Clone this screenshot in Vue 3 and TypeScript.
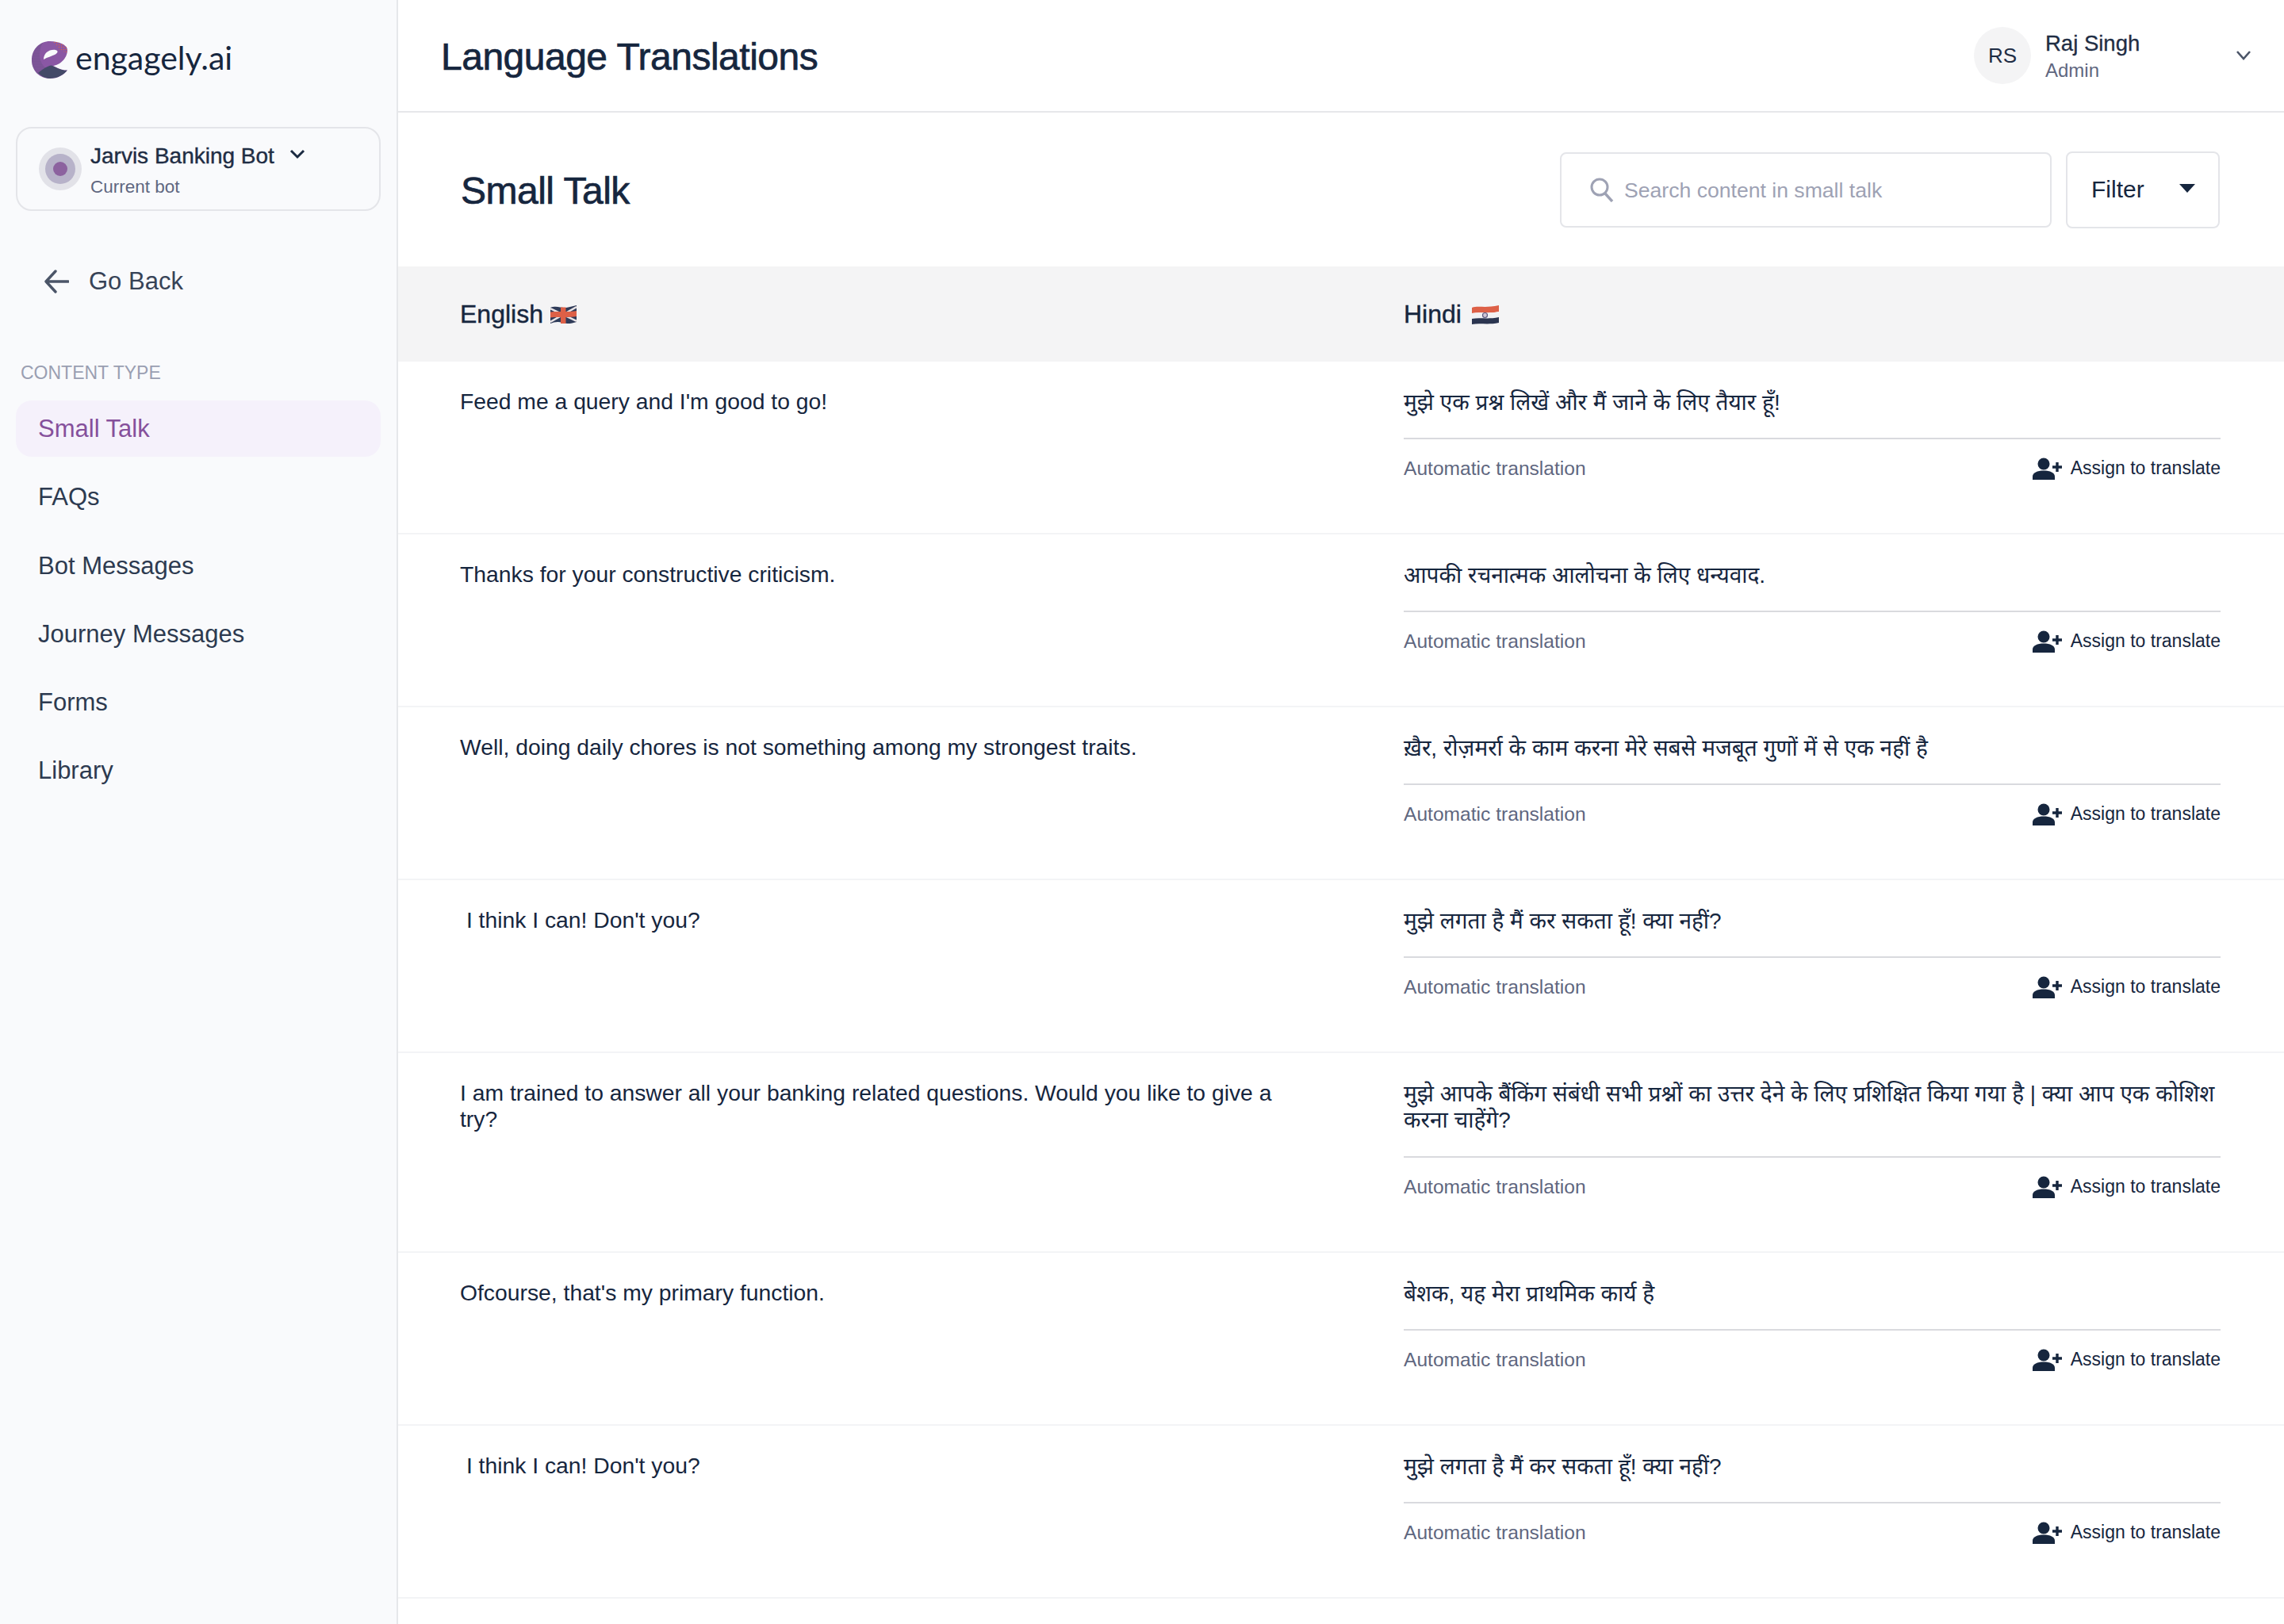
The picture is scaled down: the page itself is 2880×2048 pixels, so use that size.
<script setup lang="ts">
interface Row {
  en: string
  hi: string
}

const navItems = ['Small Talk', 'FAQs', 'Bot Messages', 'Journey Messages', 'Forms', 'Library']

const rows: Row[] = [
  { en: "Feed me a query and I'm good to go!", hi: 'मुझे एक प्रश्न लिखें और मैं जाने के लिए तैयार हूँ!' },
  { en: 'Thanks for your constructive criticism.', hi: 'आपकी रचनात्मक आलोचना के लिए धन्यवाद.' },
  { en: 'Well, doing daily chores is not something among my strongest traits.', hi: 'ख़ैर, रोज़मर्रा के काम करना मेरे सबसे मजबूत गुणों में से एक नहीं है' },
  { en: " I think I can! Don't you?", hi: 'मुझे लगता है मैं कर सकता हूँ! क्या नहीं?' },
  { en: 'I am trained to answer all your banking related questions. Would you like to give a try?', hi: 'मुझे आपके बैंकिंग संबंधी सभी प्रश्नों का उत्तर देने के लिए प्रशिक्षित किया गया है | क्या आप एक कोशिश करना चाहेंगे?' },
  { en: "Ofcourse, that's my primary function.", hi: 'बेशक, यह मेरा प्राथमिक कार्य है' },
  { en: " I think I can! Don't you?", hi: 'मुझे लगता है मैं कर सकता हूँ! क्या नहीं?' }
]
</script>

<template>
  <div class="page">
    <aside class="sidebar">
      <div class="logo">
        <svg class="logo-mark" width="46" height="48" viewBox="0 0 46 48">
          <defs>
            <pattern id="dotsDark" width="2" height="2" patternUnits="userSpaceOnUse">
              <circle cx="1" cy="1" r="0.600" fill="#4a4668" />
            </pattern>
            <pattern id="dotsOrange" width="3" height="3" patternUnits="userSpaceOnUse">
              <circle cx="1.500" cy="1.500" r="0.700" fill="#e4633c" />
            </pattern>
            <clipPath id="logoClip">
              <path d="M45 11C45 5 35 0 23 0C10 0 0 10 0 24C0 37 10 47 23 47C33 47 41 42 45 36.500C38 37 33 34 27 31C35 30 45 22 45 11Z" />
            </clipPath>
          </defs>
          <path d="M45 11C45 5 35 0 23 0C10 0 0 10 0 24C0 37 10 47 23 47C33 47 41 42 45 36.500C38 37 33 34 27 31C35 30 45 22 45 11Z" fill="#8a57a4" />
          <g clip-path="url(#logoClip)">
            <path d="M0 0H15C8 12 8 26 18 34L8 42H0Z" fill="url(#dotsDark)" />
            <path d="M26 0H46V15L36 12Z" fill="url(#dotsOrange)" />
            <path d="M8 40C14 35 20 31 25 30.500C31 33 38 37 45 36.500C41 42 33 47 23 47C17 47 12 44 8 40Z" fill="#444a68" />
          </g>
          <path d="M15 23C15 15 22 10 30 11C34 12 33 15 29 17C25 19 20 20 15 23Z" fill="#f9fafc" />
        </svg>
        <span class="logo-text">engagely.ai</span>
      </div>

      <div class="bot-card">
        <div class="bot-avatar"><span class="bot-avatar-mid"><span class="bot-avatar-dot"></span></span></div>
        <div class="bot-info">
          <div class="bot-name">
            <span>Jarvis Banking Bot</span>
            <svg width="20" height="14" viewBox="0 0 20 14" fill="none">
              <path d="M2 3L10 11L18 3" stroke="#1b2a41" stroke-width="3" />
            </svg>
          </div>
          <div class="bot-sub">Current bot</div>
        </div>
      </div>

      <div class="go-back">
        <svg width="32" height="30" viewBox="0 0 32 30" fill="none">
          <path d="M15 2L3 15L15 28M3 15H31" stroke="#4b5568" stroke-width="3.400" stroke-linecap="round" stroke-linejoin="round" />
        </svg>
        <span>Go Back</span>
      </div>

      <div class="nav-label">CONTENT TYPE</div>
      <nav class="nav">
        <div v-for="(item, i) in navItems" :key="item" class="nav-item" :class="{ active: i === 0 }">{{ item }}</div>
      </nav>
    </aside>

    <main class="main">
      <header class="topbar">
        <h1 class="page-title">Language Translations</h1>
        <div class="user">
          <div class="user-avatar">RS</div>
          <div class="user-info">
            <div class="user-name">Raj Singh</div>
            <div class="user-role">Admin</div>
          </div>
          <svg class="user-caret" width="20" height="14" viewBox="0 0 20 14" fill="none">
            <path d="M2 2L10 11L18 2" stroke="#4b5568" stroke-width="2.600" />
          </svg>
        </div>
      </header>

      <section class="toolbar">
        <h2 class="section-title">Small Talk</h2>
        <div class="search">
          <svg width="32" height="32" viewBox="0 0 32 32" fill="none">
            <circle cx="13" cy="13" r="10" stroke="#9ea2b4" stroke-width="3" />
            <path d="M20 21L29 31" stroke="#9ea2b4" stroke-width="3.400" />
          </svg>
          <span>Search content in small talk</span>
        </div>
        <div class="filter">
          <span>Filter</span>
          <i class="filter-caret"></i>
        </div>
      </section>

      <div class="table-head">
        <div class="head-cell head-en">
          <span>English</span>
          <svg class="flag" width="33" height="24" viewBox="0 0 33 24">
            <path d="M0 3C8 0 14 4 20 3C25 2 29 1 33 0V21C27 23 21 24 15 22C10 20 5 21 0 23Z" fill="#2f3b59" />
            <path d="M0 4L33 20M33 2L0 21" stroke="#e9e4e6" stroke-width="2.500" />
            <path d="M13 2.500H19.500V23H13Z" fill="#dd6047" />
            <path d="M0 8.500C10 7 22 9 33 7V14C22 16 10 14 0 15.500Z" fill="#dd6047" />
          </svg>
        </div>
        <div class="head-cell">
          <span>Hindi</span>
          <svg class="flag flag-in" width="34" height="24" viewBox="0 0 34 24">
            <path d="M0 3C8 0 16 4 34 0V8C20 11 10 8 0 10Z" fill="#dd6047" />
            <path d="M0 10C10 8 20 11 34 8V15C20 18 10 15 0 17Z" fill="#f1f1f4" />
            <path d="M0 17C10 15 20 18 34 15V22C20 25 10 22 0 24Z" fill="#2b3550" />
            <circle cx="16.500" cy="12.500" r="3" fill="#cfc6d6" stroke="#5d5a80" stroke-width="1.200" />
          </svg>
        </div>
      </div>

      <div v-for="(row, i) in rows" :key="i" class="row">
        <div class="cell-en">{{ row.en }}</div>
        <div class="cell-hi">
          <div class="hi-text">{{ row.hi }}</div>
          <div class="hi-foot">
            <span class="auto">Automatic translation</span>
            <span class="assign">
              <svg width="38" height="28" viewBox="0 0 38 28">
                <circle cx="14" cy="8" r="7.500" fill="#16263e" />
                <path d="M0 28V24C0 19 6 16.500 14 16.500C22 16.500 28 19 28 24V28Z" fill="#16263e" />
                <path d="M31 6V18M25 12H37" stroke="#16263e" stroke-width="3.400" fill="none" />
              </svg>
              <span>Assign to translate</span>
            </span>
          </div>
        </div>
      </div>
    </main>
  </div>
</template>

<style>
html,
body {
  margin: 0;
  background: #fff;
}
</style>

<style scoped>
.page {
  display: flex;
  width: 2880px;
  height: 2048px;
  overflow: hidden;
  font-family: "Liberation Sans", "Noto Sans", sans-serif;
  color: #16263e;
}

.sidebar {
  width: 500px;
  flex: none;
  background: #f9fafc;
  border-right: 2px solid #e6e7ea;
  display: flex;
  flex-direction: column;
}

.logo {
  display: flex;
  align-items: center;
  gap: 9px;
  height: 50px;
  margin: 51px 0 0 40px;
}

.logo-text {
  font-family: Lato, sans-serif;
  font-size: 41px;
  line-height: 50px;
  margin-top: -6px;
  color: #16263e;
}

.bot-card {
  display: flex;
  align-items: center;
  gap: 11px;
  box-sizing: border-box;
  width: 460px;
  height: 106px;
  margin: 59px 0 0 20px;
  padding: 0 0 0 27px;
  border: 2px solid #e4e5e9;
  border-radius: 20px;
}

.bot-avatar {
  width: 54px;
  height: 54px;
  border-radius: 50%;
  background: #e2e2e8;
  display: flex;
  align-items: center;
  justify-content: center;
}

.bot-avatar-mid {
  width: 38px;
  height: 38px;
  border-radius: 50%;
  background: #b7b2c9;
  display: flex;
  align-items: center;
  justify-content: center;
}

.bot-avatar-dot {
  width: 18px;
  height: 18px;
  border-radius: 50%;
  background: #8c629f;
}

.bot-info {
  padding-top: 4px;
}

.bot-name {
  display: flex;
  align-items: center;
  gap: 19px;
  font-size: 28px;
  line-height: 36px;
  -webkit-text-stroke: 0.4px #1f2d44;
  color: #1f2d44;
}

.bot-name svg {
  margin-top: -6px;
}

.bot-sub {
  font-size: 22.500px;
  line-height: 30px;
  margin-top: 6px;
  color: #5f6780;
}

.go-back {
  display: flex;
  align-items: center;
  gap: 25px;
  margin: 71px 0 0 55px;
  height: 36px;
  font-size: 31px;
  color: #374357;
}

.nav-label {
  margin: 83px 0 0 26px;
  font-size: 23px;
  line-height: 28px;
  color: #9a9fb2;
}

.nav {
  display: flex;
  flex-direction: column;
  gap: 15.300px;
  margin: 21px 20px 0;
}

.nav-item {
  height: 71px;
  line-height: 71px;
  padding-left: 28px;
  border-radius: 20px;
  font-size: 31px;
  color: #2d3a50;
}

.nav-item.active {
  background: #f5f1fb;
  color: #85509b;
}

.main {
  flex: 1;
  min-width: 0;
  display: flex;
  flex-direction: column;
}

.topbar {
  display: flex;
  align-items: center;
  justify-content: space-between;
  box-sizing: border-box;
  height: 142px;
  padding: 0 41px 0 54px;
  border-bottom: 2px solid #e6e7ea;
}

.page-title {
  margin: 3px 0 0;
  font-size: 48px;
  font-weight: 400;
  -webkit-text-stroke: 0.7px #16263e;
  letter-spacing: -0.500px;
}

.user {
  display: flex;
  align-items: center;
}

.user-avatar {
  width: 72px;
  height: 72px;
  border-radius: 50%;
  background: #f4f4f5;
  display: flex;
  align-items: center;
  justify-content: center;
  font-size: 26px;
  color: #1f2d44;
}

.user-info {
  width: 240px;
  margin-left: 18px;
}

.user-name {
  font-size: 27.500px;
  line-height: 36px;
  -webkit-text-stroke: 0.3px #1f2d44;
  color: #1f2d44;
}

.user-role {
  font-size: 24px;
  line-height: 30px;
  margin-top: 1px;
  color: #5f6780;
}

.toolbar {
  display: flex;
  align-items: center;
  box-sizing: border-box;
  height: 194px;
  padding: 0 81px 0 79px;
}

.section-title {
  flex: 1;
  margin: 3px 0 0;
  font-size: 48px;
  font-weight: 400;
  -webkit-text-stroke: 0.7px #16263e;
  letter-spacing: -0.500px;
}

.search {
  display: flex;
  align-items: center;
  gap: 12px;
  box-sizing: border-box;
  width: 620px;
  height: 95px;
  padding-left: 35px;
  border: 2px solid #e4e5e9;
  border-radius: 8px;
  font-size: 26.600px;
  color: #9ea2b4;
}

.search span {
  margin-top: 2px;
}

.filter {
  display: flex;
  align-items: center;
  justify-content: space-between;
  box-sizing: border-box;
  width: 194px;
  height: 97px;
  margin-left: 18px;
  padding: 0 29px 0 30px;
  border: 2px solid #e4e5e9;
  border-radius: 8px;
  font-size: 30px;
  color: #16263e;
}

.filter-caret {
  width: 0;
  height: 0;
  border-left: 10px solid transparent;
  border-right: 10px solid transparent;
  border-top: 11px solid #16263e;
  margin-top: -4px;
}

.table-head {
  display: grid;
  grid-template-columns: 1fr 1fr;
  height: 120px;
  background: #f4f4f5;
}

.head-cell {
  display: flex;
  align-items: center;
  gap: 9px;
  padding: 1px 79px 0;
  font-size: 32px;
  -webkit-text-stroke: 0.4px #16263e;
}

.head-en {
  padding-left: 78px;
}

.flag-in {
  margin-left: 4px;
}

.row {
  display: grid;
  grid-template-columns: 1fr 1fr;
  padding-top: 34.500px;
  padding-bottom: 46px;
  border-bottom: 2px solid #f3f4f6;
}

.cell-en,
.cell-hi {
  line-height: 33.600px;
}

.cell-en {
  padding: 0 79px 0 78px;
  margin-top: -1px;
  font-size: 28.300px;
  white-space: pre-wrap;
}

.cell-hi {
  padding: 0 80px 0 79px;
  font-size: 28px;
}

.hi-text {
  padding-bottom: 28px;
  border-bottom: 2px solid #d9dade;
}

.hi-foot {
  display: flex;
  align-items: center;
  justify-content: space-between;
  height: 72px;
  padding-top: 1px;
  box-sizing: border-box;
}

.auto {
  font-size: 24.600px;
  color: #5f6780;
}

.assign {
  display: flex;
  align-items: center;
  gap: 10px;
  font-size: 23px;
  color: #16263e;
}
</style>
